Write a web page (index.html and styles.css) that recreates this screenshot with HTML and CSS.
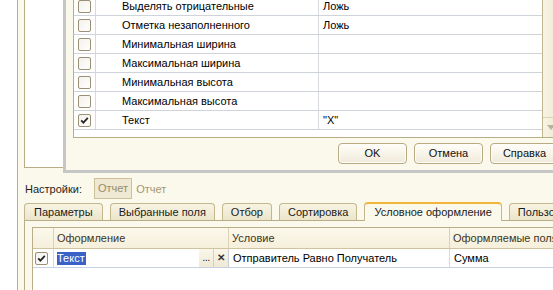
FILE: index.html
```html
<!DOCTYPE html>
<html lang="ru">
<head>
<meta charset="utf-8">
<title>Настройки отчета</title>
<link rel="stylesheet" href="styles.css">
</head>
<body>
<div class="app">
  <div class="report"></div>
  <div class="settings">
    <span class="label">Настройки:</span>
    <span class="variant">Отчет</span>
    <span class="variant-name">Отчет</span>
  </div>
  <div class="tabs">
    <div class="tab">Параметры</div>
    <div class="tab">Выбранные поля</div>
    <div class="tab">Отбор</div>
    <div class="tab">Сортировка</div>
    <div class="tab active">Условное оформление</div>
    <div class="tab">Пользовательские поля</div>
  </div>
  <div class="panel">
    <div class="grid">
      <div class="ghead">
        <div class="gc"></div>
        <div class="gc">Оформление</div>
        <div class="gc">Условие</div>
        <div class="gc">Оформляемые поля</div>
      </div>
      <div class="grow">
        <div class="gc gc-chk"><span class="chk"><svg viewBox="0 0 11 11" width="11" height="11"><path d="M2.2 5.3 L4.4 7.6 L8.8 2.9" fill="none" stroke="#262626" stroke-width="1.8"/></svg></span></div>
        <div class="gc gc-edit">
          <span class="edit-text"><span class="sel">Текст</span></span>
          <span class="edit-btn dots">...</span>
          <span class="edit-btn clear">✕</span>
        </div>
        <div class="gc">Отправитель Равно Получатель</div>
        <div class="gc">Сумма</div>
      </div>
    </div>
  </div>
</div>

<div class="dialog">
  <div class="ptable">
    <div class="prows">
      <div class="prow"><div class="pc pc-chk"><span class="chk"></span></div><div class="pc pc-name">Выделять отрицательные</div><div class="pc pc-val">Ложь</div></div>
      <div class="prow"><div class="pc pc-chk"><span class="chk"></span></div><div class="pc pc-name">Отметка незаполненного</div><div class="pc pc-val">Ложь</div></div>
      <div class="prow"><div class="pc pc-chk"><span class="chk"></span></div><div class="pc pc-name">Минимальная ширина</div><div class="pc pc-val"></div></div>
      <div class="prow"><div class="pc pc-chk"><span class="chk"></span></div><div class="pc pc-name">Максимальная ширина</div><div class="pc pc-val"></div></div>
      <div class="prow"><div class="pc pc-chk"><span class="chk"></span></div><div class="pc pc-name">Минимальная высота</div><div class="pc pc-val"></div></div>
      <div class="prow"><div class="pc pc-chk"><span class="chk"></span></div><div class="pc pc-name">Максимальная высота</div><div class="pc pc-val"></div></div>
      <div class="prow"><div class="pc pc-chk"><span class="chk"><svg viewBox="0 0 11 11" width="11" height="11"><path d="M2.2 5.3 L4.4 7.6 L8.8 2.9" fill="none" stroke="#262626" stroke-width="1.8"/></svg></span></div><div class="pc pc-name">Текст</div><div class="pc pc-val">"X"</div></div>
    </div>
    <div class="scroll">
      <div class="scroll-track"></div>
      <div class="scroll-down"><span class="tri"></span></div>
    </div>
  </div>
  <div class="buttons">
    <div class="btn">OK</div>
    <div class="btn">Отмена</div>
    <div class="btn">Справка</div>
  </div>
</div>
</body>
</html>
```
FILE: styles.css
```css
* { box-sizing: border-box; }
html, body { margin: 0; padding: 0; }
body {
  position: relative;
  width: 553px;
  height: 290px;
  overflow: hidden;
  background: #ffffff;
  font: 11px "Liberation Sans", Arial, sans-serif;
  color: #000;
}

.app {
  margin-left: 17px;
  height: 290px;
  border-left: 1px solid #b9ad88;
  background: #fbf8ec;
  padding-left: 6px;
  overflow: hidden;
}

.report {
  height: 168px;
  background: #fff;
  border-left: 1px solid #b9ad88;
  border-bottom: 1px solid #b9ad88;
}

.settings {
  display: flex;
  align-items: center;
  height: 21px;
  margin-top: 10px;
}
.label { margin-left: 1px; margin-right: 12px; color: #1e1e1e; }
.variant {
  height: 21px;
  line-height: 19px;
  padding: 0 3px;
  border: 1px solid #cdc09a;
  background: #efe9d3;
  color: #978b67;
}
.variant-name { margin-left: 4px; color: #a3966f; }

.tabs {
  display: flex;
  align-items: flex-end;
  gap: 7px;
  height: 18px;
  margin-top: 3px;
}
.tab {
  flex: none;
  height: 17px;
  line-height: 16px;
  padding: 0 8px;
  border: 1px solid #c4b78f;
  border-bottom: 0;
  border-radius: 4px 4px 0 0;
  background: linear-gradient(#f8f4e3, #ece5cb);
  white-space: nowrap;
  color: #1a1a1a;
}
.tab:first-child { padding: 0 9px; }
.tab.active {
  position: relative;
  z-index: 1;
  height: 19px;
  margin-bottom: -1px;
  line-height: 17px;
  padding: 0 9px;
  background: #fbf8ec;
  border-top: 2px solid #f3b43a;
}

.panel {
  height: 80px;
  border-top: 1px solid #b9ad88;
  border-left: 1px solid #b9ad88;
  padding: 6px 0 0 7px;
}
.grid {
  height: 80px;
  width: 640px;
  background: #fff;
  border-left: 1px solid #b9ad88;
  border-top: 1px solid #b9ad88;
}
.ghead, .grow {
  display: grid;
  grid-template-columns: 21px 175px 221px 223px;
}
.ghead {
  height: 21px;
  background: linear-gradient(#fbf8ec, #f5efdb);
  border-bottom: 1px solid #cfc3a0;
  color: #3e3420;
}
.ghead .gc {
  border-right: 1px solid #dcd2b2;
  line-height: 20px;
  padding-left: 3px;
  white-space: nowrap;
}
.grow {
  height: 19px;
  border-bottom: 1px solid #c6d2e4;
}
.grow .gc {
  border-right: 1px solid #d5dbe3;
  line-height: 18px;
  padding-left: 4px;
  white-space: nowrap;
}
.grow .gc-chk { padding-left: 2px; display: flex; align-items: center; }
.grow .gc-edit {
  display: flex;
  padding-left: 3px;
  border-right: 1px solid #c9ced6;
}
.edit-text { flex: 1; display: flex; align-items: center; }
.sel {
  background: #3a62c6;
  color: #fff;
  line-height: 13px;
  height: 13px;
  padding-right: 1px;
}
.edit-btn {
  flex: none;
  text-align: center;
  background: linear-gradient(#faf7ea, #efe9d5);
  color: #2a2a2a;
}
.dots { width: 14px; line-height: 17px; letter-spacing: -0.5px; }
.clear { width: 15px; border-left: 1px solid #d8cfb4; font-size: 10px; font-weight: bold; color: #333; }

.chk {
  display: inline-flex;
  align-items: center;
  justify-content: center;
  width: 13px;
  height: 13px;
  border: 1px solid #9a9076;
  border-radius: 2px;
  background: linear-gradient(135deg, #f3f1ea, #ffffff);
}

.dialog {
  position: absolute;
  left: 63px;
  top: -4px;
  width: 502px;
  border-left: 3px solid #c6c6c6;
  border-bottom: 3px solid #c6c6c6;
  background: #fbf8ec;
  padding: 0 6px 6px 7px;
}
.ptable {
  display: flex;
  height: 142px;
  border: 1px solid #b9ad88;
  background: #fff;
}
.prows { flex: 1; }
.prow {
  display: grid;
  grid-template-columns: 22px 223px 1fr;
  height: 19px;
  border-bottom: 1px solid #cfd4da;
}
.pc {
  border-right: 1px solid #d6dadf;
  line-height: 18px;
  white-space: nowrap;
}
.pc:last-child { border-right: 0; }
.pc-chk { display: flex; align-items: center; justify-content: center; }
.pc-name { padding-left: 26px; }
.pc-val { padding-left: 4px; }

.scroll {
  width: 16px;
  display: flex;
  flex-direction: column;
  border-left: 1px solid #c2b58e;
  background: linear-gradient(to right, #f8f4e4, #efe9d3);
}
.scroll-track { flex: 1; }
.scroll-down {
  height: 20px;
  border-top: 1px solid #ddd4b6;
  display: flex;
  align-items: center;
  justify-content: center;
}
.tri {
  width: 0;
  height: 0;
  border-left: 4px solid transparent;
  border-right: 4px solid transparent;
  border-top: 5px solid #bab39c;
}

.buttons {
  display: flex;
  justify-content: flex-end;
  gap: 7px;
  margin-top: 5px;
}
.btn {
  width: 69px;
  height: 21px;
  line-height: 19px;
  text-align: center;
  border: 1px solid #b8ab84;
  border-radius: 4px;
  background: linear-gradient(#fffef9, #f0eada);
  box-shadow: inset 0 0 0 1px #fffdf6;
  color: #111;
}
```
